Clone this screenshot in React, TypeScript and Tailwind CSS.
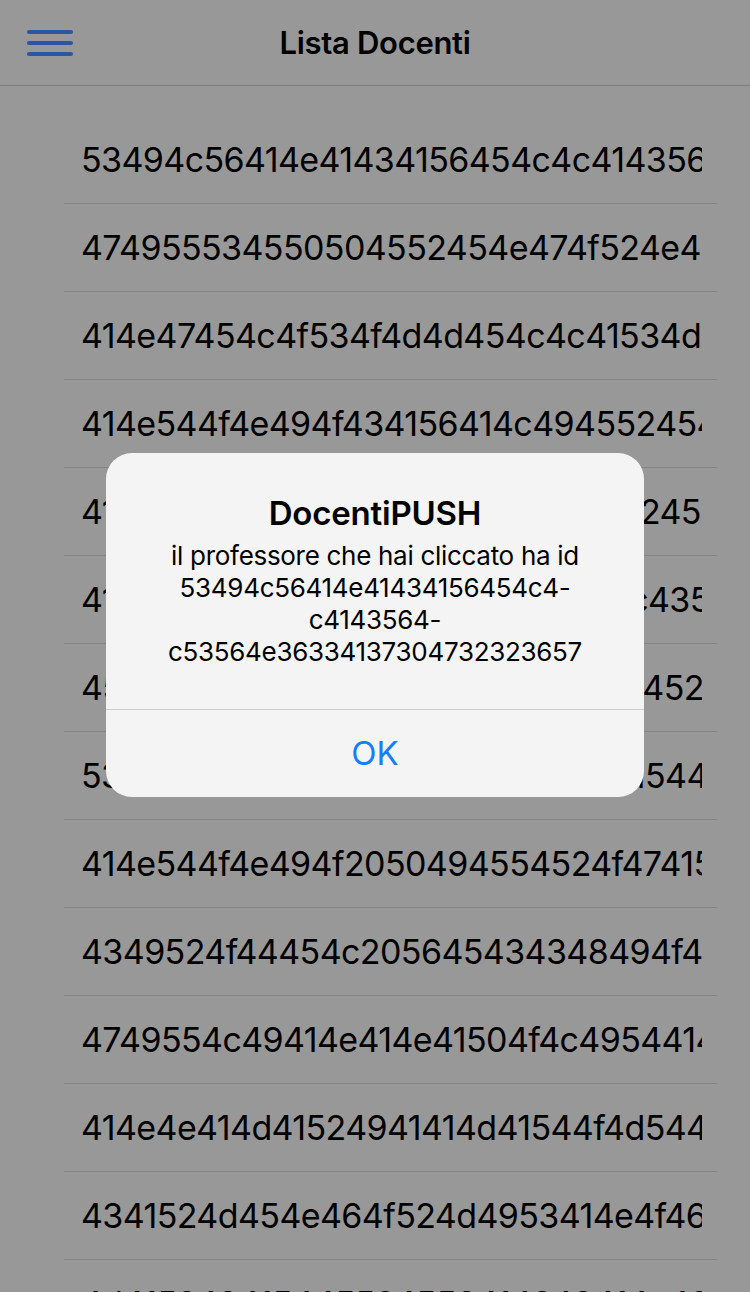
const DOCENTI = [
  "53494c56414e41434156454c4c414356",
  "474955534550504552454e474f524e47",
  "414e47454c4f534f4d4d454c4c41534d4",
  "414e544f4e494f434156414c4945524541",
  "414c455353414e44524f424f4e4552454e",
  "414e4e414d415249414445534343c43554",
  "45474944494f4c4f5245544f4d41445245",
  "534f4649414d4152434f4c4f4e4e4154441",
  "414e544f4e494f2050494554524f474154e4f",
  "4349524f44454c205645434348494f444f",
  "4749554c49414e414e41504f4c49544144e",
  "414e4e414d41524941414d41544f4d5444",
  "4341524d454e464f524d4953414e4f4649",
  "4d415249415445524553414249414e4348",
];

function Hamburger() {
  return (
    <div className="flex w-[46px] flex-col gap-[7px]">
      <span className="block h-[4px] w-full rounded-full bg-[#2b56a3]" />
      <span className="block h-[4px] w-full rounded-full bg-[#2b56a3]" />
      <span className="block h-[4px] w-full rounded-full bg-[#2b56a3]" />
    </div>
  );
}

export default function App() {
  return (
    <div
      className="relative h-screen overflow-hidden bg-[#989898] text-black"
      style={{ fontFamily: "Inter, 'Liberation Sans', sans-serif" }}
    >
      <header className="flex h-[86px] items-center border-b border-[#7f7f7f] px-[27px]">
        <Hamburger />
        <h1 className="flex-1 pr-[46px] text-center text-[31px] font-semibold leading-[40px] tracking-[-0.3px]">
          Lista Docenti
        </h1>
      </header>

      <ul className="ml-[64px] mr-[33px] pt-[30px]">
        {DOCENTI.map((id) => (
          <li
            key={id}
            className="flex h-[88px] items-center border-b border-[#858585] pl-[17px] pr-[15px]"
          >
            <span className="block overflow-hidden whitespace-nowrap text-[34px] font-normal leading-[40px] tracking-[-0.6px]">
              {id}
            </span>
          </li>
        ))}
      </ul>

      <div className="absolute left-[106px] top-[453px] w-[538px] overflow-hidden rounded-[26px] bg-[#f4f4f4]">
        <div className="px-[30px] pb-[41px] pt-[40px] text-center">
          <h2 className="text-[33px] font-semibold leading-[40px] tracking-[-0.2px]">DocentiPUSH</h2>
          <p className="mt-[7px] text-[26px] leading-[32px] tracking-[-0.3px]">
            il professore che hai cliccato ha id
            <br />
            53494c56414e41434156454c4-
            <br />
            c4143564-
            <br />
            c53564e36334137304732323657
          </p>
        </div>
        <div className="border-t border-[#cdcdcd]">
          <button className="flex h-[87px] w-full items-center justify-center text-[33px] text-[#157efb]">
            OK
          </button>
        </div>
      </div>
    </div>
  );
}
